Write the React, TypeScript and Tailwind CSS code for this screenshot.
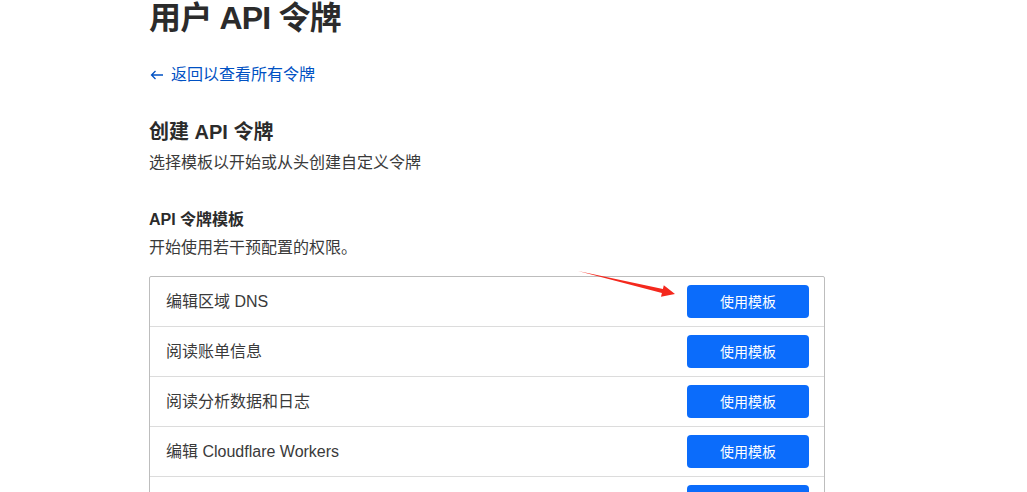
import React from 'react';

const templates = [
    '编辑区域 DNS',
    '阅读账单信息',
    '阅读分析数据和日志',
    '编辑 Cloudflare Workers',
    '读取所有资源',
];

// Red annotation arrow drawn over the first row
const Annotation: React.FC = () => (
    <svg className="absolute left-0 top-0 pointer-events-none" width="1027" height="492" viewBox="0 0 1027 492">
        <polygon
            points="578,271 662.9,289.1 663.8,285.2 675,294 661,296.8 661.9,293"
            fill="#f4281d"
        />
    </svg>
);

export default function App() {
    return (
        <div
            className="relative min-h-screen bg-white pl-[149px] pb-10"
            style={{ fontFamily: '"Liberation Sans", "Noto Sans CJK SC", sans-serif' }}
        >
            <div className="w-[676px]">
                <h1 className="text-[32px] leading-[36px] font-bold tracking-tight text-[#2b2b2b]">用户 API 令牌</h1>

                <a href="#" className="mt-[27px] flex items-center gap-[7px] text-base leading-6 text-[#0051c3]">
                    <svg width="14" height="10" viewBox="0 0 14 10" fill="none" stroke="currentColor" strokeWidth="1.3" className="ml-px">
                        <path d="M13 5H1.5M5.5 1L1.5 5l4 4" />
                    </svg>
                    <span>返回以查看所有令牌</span>
                </a>

                <h2 className="mt-[31px] text-xl leading-7 font-semibold text-[#2b2b2b]">创建 API 令牌</h2>
                <p className="mt-[5px] text-base leading-6 text-[#3a3a3a]">选择模板以开始或从头创建自定义令牌</p>

                <h3 className="mt-[33px] text-base leading-6 font-bold text-[#2b2b2b]">API 令牌模板</h3>
                <p className="mt-1 text-base leading-6 text-[#3a3a3a]">开始使用若干预配置的权限。</p>

                <div className="mt-4 border border-[#bdbdbd] rounded-[2px]">
                    {templates.map((name, i) => (
                        <div
                            key={name}
                            className={`flex h-[49px] items-center justify-between pl-4 pr-[15px] ${i > 0 ? 'border-t border-[#dcdcdc] h-[50px]' : ''}`}
                        >
                            <span className="text-base text-[#3a3a3a]">{name}</span>
                            <button className="h-[33px] w-[122px] rounded-[4px] bg-[#0b6cfb] text-sm text-white">
                                使用模板
                            </button>
                        </div>
                    ))}
                </div>
            </div>
            <Annotation />
        </div>
    );
}
